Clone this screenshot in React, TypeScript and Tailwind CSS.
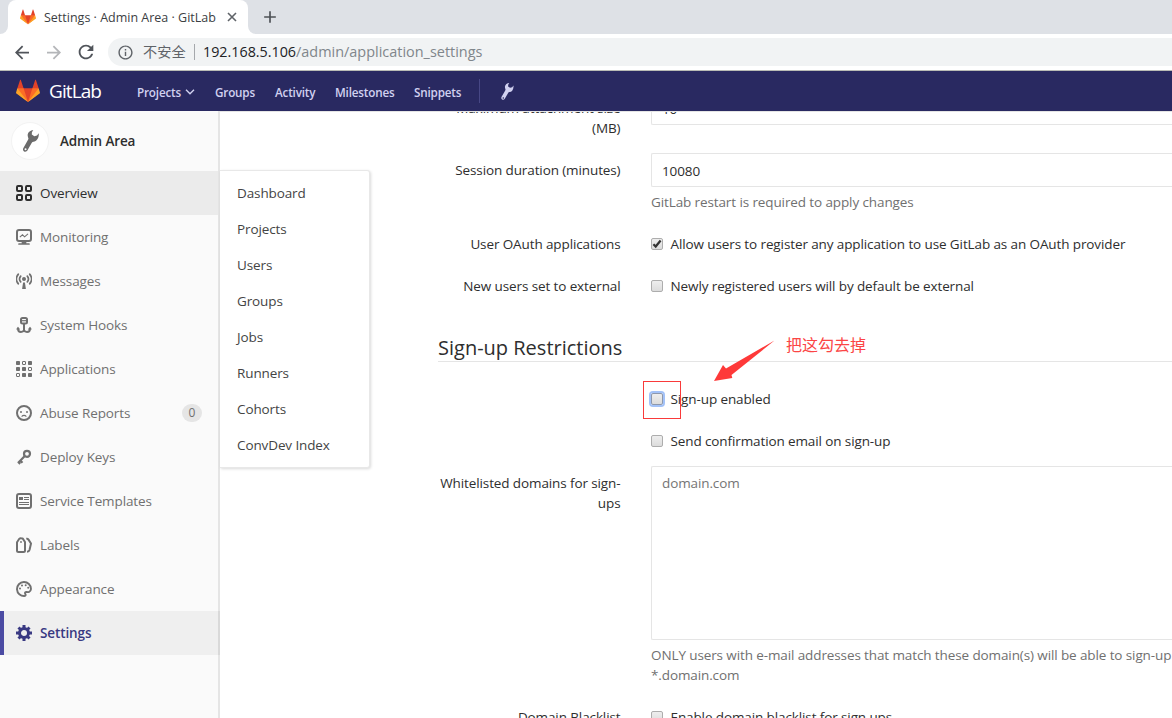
import React from "react";
import { MdAdd, MdArrowBack, MdArrowForward, MdInfoOutline, MdRefresh } from "react-icons/md";

function Tanuki({ className }: { className: string }) {
  return (
    <svg viewBox="0 0 36 36" className={className}>
      <path fill="#e24329" d="M2 14l9.38 9v-9l-4-12.28c-.205-.632-1.176-.632-1.38 0z" />
      <path fill="#e24329" d="M34 14l-9.38 9v-9l4-12.28c.205-.632 1.176-.632 1.38 0z" />
      <path fill="#e24329" d="M18 34.38 3 14h30z" />
      <path fill="#fc6d26" d="M18 34.38 11.38 14H2l4 11z" />
      <path fill="#fc6d26" d="M18 34.38 24.62 14H34l-4 11z" />
      <path fill="#fca326" d="M2 14L.1 20.16c-.18.565 0 1.2.5 1.56l17.42 12.66z" />
      <path fill="#fca326" d="M34 14l1.9 6.16c.18.565 0 1.2-.5 1.56L18 34.38z" />
    </svg>
  );
}

function Wrench({ className }: { className: string }) {
  return (
    <svg viewBox="0 0 16 22" className={className} fill="currentColor">
      <path
        fillRule="evenodd"
        d="M10.300 0C7.500.2 5 2 4.700 4.600c-.2 1.400.3 2.500.7 3.600.1.700-.1 1.200-.5 1.900L.4 17.900c-.8 1.400-.4 2.900.7 3.500 1.200.7 2.600.3 3.400-1.100l4.300-7.500c.4-.6.9-.9 1.700-1 3.300-.5 5.600-3.700 5.300-8.600L14 5.500l-2.700.700L8.800 4.500 8.900 2.200zM2.600 18.300a1 1 0 1 1-.1 2 1 1 0 0 1 .1-2z"
      />
    </svg>
  );
}

const icons: Record<string, React.ReactNode> = {
  overview: (
    <g fill="none" stroke="currentColor" strokeWidth="2">
      <rect x="1" y="1" width="5" height="5" rx="1" />
      <rect x="10" y="1" width="5" height="5" rx="1" />
      <rect x="1" y="10" width="5" height="5" rx="1" />
      <rect x="10" y="10" width="5" height="5" rx="1" />
    </g>
  ),
  monitoring: (
    <g fill="none" stroke="currentColor">
      <rect x="1" y="1" width="14" height="11" rx="2" strokeWidth="2" />
      <path d="M3.800 8.200 6.500 5.800 8.600 7.800 12 4.800" strokeWidth="1.100" />
      <path d="M6.500 12.500h3v1.500h-3zM3 15h10" strokeWidth="1.700" strokeLinecap="round" />
    </g>
  ),
  messages: (
    <g fill="none" stroke="currentColor" strokeLinecap="round">
      <circle cx="8" cy="6" r="2" fill="currentColor" stroke="none" />
      <path d="M7.100 9.500h1.800L9.900 16H6.100z" fill="currentColor" stroke="none" />
      <path d="M4.700 3.100a4.600 4.600 0 0 0 0 5.800M11.300 3.100a4.600 4.600 0 0 1 0 5.800" strokeWidth="1.700" />
      <path d="M2.200 1.300a7.300 7.300 0 0 0 0 9.400M13.800 1.300a7.300 7.300 0 0 1 0 9.400" strokeWidth="1.800" />
    </g>
  ),
  hooks: (
    <g fill="none" stroke="currentColor" strokeWidth="2" strokeLinejoin="round">
      <rect x="5" y="1" width="6" height="5.500" rx="1.500" />
      <path d="M5 3.700h6" strokeWidth="1.200" />
      <path d="M8 7v8" />
      <path d="M2 11.500C2 13.700 3.200 15 5 15c1.600 0 2.500-.7 3-2 .5 1.300 1.400 2 3 2 1.800 0 3-1.300 3-3.500" />
      <path d="M.7 12.500 2 10.500l1.500 2M12.500 12.500l1.500-2 1.300 2" strokeWidth="1.200" />
    </g>
  ),
  applications: (
    <g fill="currentColor">
      <rect width="4" height="4" rx=".8" />
      <rect x="12" width="4" height="4" rx=".8" />
      <rect y="6" width="4" height="4" rx=".8" />
      <rect x="6" y="6" width="4" height="4" rx=".8" />
      <rect x="6" y="12" width="4" height="4" rx=".8" />
      <rect x="12" y="12" width="4" height="4" rx=".8" />
      <g fill="none" stroke="currentColor">
        <rect x="6.500" y=".5" width="3" height="3" rx=".3" />
        <rect x="12.500" y="6.500" width="3" height="3" rx=".3" />
        <rect x=".5" y="12.500" width="3" height="3" rx=".3" />
      </g>
    </g>
  ),
  abuse: (
    <g fill="none" stroke="currentColor">
      <circle cx="8" cy="8" r="7" strokeWidth="2" />
      <circle cx="5" cy="7" r="1" fill="currentColor" stroke="none" />
      <circle cx="11" cy="7" r="1" fill="currentColor" stroke="none" />
      <path d="M6 11.300c.8-1.300 3.200-1.300 4 0" strokeWidth="1.200" strokeLinecap="round" />
    </g>
  ),
  key: (
    <g fill="none" stroke="currentColor" strokeWidth="2.200">
      <circle cx="11" cy="4.800" r="3" />
      <path d="M8.800 7 2 14M4.200 11.600l2.300 2.200M2.300 13l1.900 1.900" />
    </g>
  ),
  template: (
    <g fill="none" stroke="currentColor">
      <rect x="1" y="1" width="14" height="14" rx="2" strokeWidth="2" />
      <rect x="3" y="4" width="4" height="3" fill="currentColor" stroke="none" />
      <path d="M8 4.500H13M8 6.500H13M3 9.500H13M3 11.500H13" />
    </g>
  ),
  labels: (
    <g fill="none" stroke="currentColor" strokeWidth="2" strokeLinejoin="round">
      <path d="M1 5.300 3.300 1.800Q4 1 5.200 1.200L6.600 1.400 9 5v8.500q0 1.500-1.500 1.500h-5Q1 15 1 13.500z" />
      <circle cx="5" cy="5" r=".9" fill="currentColor" stroke="none" />
      <path d="M10.300 1.800q1.400-.3 2.200.8L15 6.500 13.500 13q-.5 1.700-2.500 1.800" />
    </g>
  ),
  appearance: (
    <g fill="none" stroke="currentColor">
      <path
        d="M15 8A7 7 0 1 0 8.500 15c1.400 0 1.300-1.100.8-2-.7-1.300.1-2.300 1.500-2 1 .3 3.900.4 4.200-3z"
        strokeWidth="1.900"
      />
      <g fill="currentColor" stroke="none">
        <circle cx="4" cy="7.500" r="1" />
        <circle cx="6" cy="4.400" r="1" />
        <circle cx="9.700" cy="4.200" r="1" />
        <circle cx="12.200" cy="6.800" r="1" />
      </g>
    </g>
  ),
  settings: (
    <g fill="none" stroke="currentColor">
      <circle cx="8" cy="8" r="4.500" strokeWidth="3" />
      <path
        d="M8 0v3M8 13v3M0 8h3M13 8h3M2.500 2.500l2 2M11.500 11.500l2 2M13.500 2.500l-2 2M4.500 11.500l-2 2"
        strokeWidth="3"
      />
    </g>
  ),
};

function Icon({ name }: { name: string }) {
  return (
    <svg viewBox="0 0 16 16" className="mr-2 h-4 w-4 shrink-0">
      {icons[name]}
    </svg>
  );
}

const menu = [
  { icon: "overview", label: "Overview" },
  { icon: "monitoring", label: "Monitoring" },
  { icon: "messages", label: "Messages" },
  { icon: "hooks", label: "System Hooks" },
  { icon: "applications", label: "Applications" },
  { icon: "abuse", label: "Abuse Reports", badge: "0" },
  { icon: "key", label: "Deploy Keys" },
  { icon: "template", label: "Service Templates" },
  { icon: "labels", label: "Labels" },
  { icon: "appearance", label: "Appearance" },
  { icon: "settings", label: "Settings" },
];

const overviewLinks = ["Dashboard", "Projects", "Users", "Groups", "Jobs", "Runners", "Cohorts", "ConvDev Index"];

function itemStyle(label: string) {
  if (label === "Overview") return "bg-[#ebebeb] pl-4 text-[#2e2e2e]";
  if (label === "Settings")
    return "-mr-0.5 border-l-4 border-r-2 border-l-[#4b4ba3] border-r-[#d9d9d9] bg-[#efefef] pl-3 font-semibold text-[#393982]";
  return "pl-4 text-[#707070]";
}

function Browser() {
  return (
    <div className="shrink-0 tracking-normal">
      <div className="flex h-[34px] bg-[#dee1e6]">
        <div className="flex w-2 items-end bg-white">
          <div className="h-full w-2 rounded-br-lg bg-[#dee1e6]" />
        </div>
        <div className="w-60 bg-[#dee1e6]">
          <div className="flex h-[34px] items-center rounded-t-lg bg-white pl-3">
            <Tanuki className="h-4 w-4" />
            <span className="ml-2 w-[183px] whitespace-nowrap pt-px text-[12.500px] text-[#3c4043]">
              Settings · Admin Area · GitLab
            </span>
            <svg viewBox="0 0 10 10" className="h-2.5 w-2.5" stroke="#5f6368" strokeWidth="1.600">
              <path d="M1 1l8 8M9 1L1 9" />
            </svg>
          </div>
        </div>
        <div className="w-2 bg-white">
          <div className="h-full w-2 rounded-bl-lg bg-[#dee1e6]" />
        </div>
        <div className="flex items-center pl-1">
          <MdAdd className="h-5 w-5 text-[#4d5156]" />
        </div>
      </div>
      <div className="flex h-9 items-center bg-white pl-[11px]">
        <MdArrowBack className="h-[21px] w-[22px] text-[#50545a]" />
        <MdArrowForward className="ml-2.5 h-[21px] w-[22px] text-[#b4b6b9]" />
        <MdRefresh className="ml-2.5 h-[22px] w-[22px] text-[#50545a]" />
        <div className="ml-[11px] flex h-7 flex-1 items-center whitespace-nowrap rounded-l-full bg-[#f1f3f4] pl-[9px]">
          <MdInfoOutline className="h-[17px] w-[17px] text-[#5f6368]" />
          <span className="ml-[9px] w-[44px] pb-0.5 font-['Noto_Sans_CJK_SC',sans-serif] text-[14.200px] text-[#5f6368]">
            不安全
          </span>
          <span className="ml-[7px] h-4 w-px bg-[#a5a8ac]" />
          <span className="ml-2 text-[14.300px] text-[#202124]">192.168.5.106</span>
          <span className="text-[14.450px] text-[#80868b]">/admin/application_settings</span>
        </div>
      </div>
      <div className="h-px bg-[#b9bbb5]" />
    </div>
  );
}

function Navbar() {
  return (
    <div className="flex h-10 shrink-0 items-center bg-[#292961] pl-4 text-[11.700px] font-semibold tracking-[-0.180px] text-[#d1d1f0]">
      <Tanuki className="h-6 w-6" />
      <span className="ml-[9px] w-[88px] text-[19px] font-normal tracking-[-0.9px] text-white">GitLab</span>
      <span className="flex w-[78px] items-center pt-px">
        Projects
        <svg viewBox="0 0 10 6" className="ml-[3.500px] h-1.5 w-2.5" fill="none" stroke="currentColor" strokeWidth="1.400">
          <path d="M1 .8l4 4 4-4" />
        </svg>
      </span>
      <span className="w-[60px] pt-px">Groups</span>
      <span className="w-[60px] pt-px">Activity</span>
      <span className="w-[79px] pt-px">Milestones</span>
      <span className="w-[65px] pt-px">Snippets</span>
      <span className="h-6 w-px bg-[#474785]" />
      <Wrench className="ml-[21px] h-[17px] w-[13px]" />
    </div>
  );
}

function Sidebar() {
  return (
    <div className="w-[220px] shrink-0 border-r-2 border-[#e5e5e5] bg-[#fafafa]">
      <div className="flex h-[60px] items-center pl-[11px]">
        <div className="flex h-[38px] w-[38px] items-center justify-center rounded-full border border-[#f3f3f3] bg-white text-[#6b6b6b]">
          <Wrench className="ml-0.5 h-[22px] w-4" />
        </div>
        <span className="ml-[11px] font-semibold text-[#2e2e2e]">Admin Area</span>
      </div>
      {menu.map((m) => (
        <div key={m.label} className={`flex h-11 items-center ${itemStyle(m.label)}`}>
          <Icon name={m.icon} />
          <span>{m.label}</span>
          {m.badge && (
            <span className="ml-auto mr-4 flex h-[18px] w-5 items-center justify-center rounded-full bg-[#e5e5e5] text-[12px]">
              {m.badge}
            </span>
          )}
        </div>
      ))}
    </div>
  );
}

function Flyout() {
  return (
    <div className="absolute left-[220px] top-[59px] w-[150px] rounded-r-[3px] border border-l-0 border-[#e8e8e8] bg-white py-1 shadow-[1px_1px_3px_rgba(0,0,0,0.15)]">
      {overviewLinks.map((l) => (
        <div key={l} className="flex h-9 items-center pl-[17px] text-[#444]">
          {l}
        </div>
      ))}
    </div>
  );
}

function Check({ label, checked, focused }: { label: string; checked?: boolean; focused?: boolean }) {
  return (
    <div className="flex h-5 items-center whitespace-nowrap">
      <span
        className={`flex h-3 w-3 shrink-0 items-center justify-center rounded-[2px] border bg-linear-to-b from-[#eeeeee] to-[#dcdcdc] ${
          focused ? "border-[#8d98ad] shadow-[0_0_0_2px_#a3c2f8]" : "border-[#adadad]"
        }`}
      >
        {checked && (
          <svg viewBox="0 0 10 10" className="h-2.5 w-2.5" fill="none" stroke="#333" strokeWidth="2.200">
            <path d="M1.400 5.200l2.300 2.300L8.600 1.500" />
          </svg>
        )}
      </span>
      <span className="ml-[7.500px]">{label}</span>
    </div>
  );
}

function Row({ label, className, children }: { label?: React.ReactNode; className: string; children: React.ReactNode }) {
  return (
    <div className={`flex shrink-0 ${className}`}>
      <div className="w-[401px] shrink-0 pr-[0.500px] pt-[7px] text-right leading-5">{label}</div>
      <div className="ml-[30px] min-w-0 flex-1">{children}</div>
    </div>
  );
}

function Form() {
  return (
    <div className="flex min-w-0 flex-1 flex-col overflow-hidden border-t border-[#e5e5e5] bg-white text-[#2e2e2e]">
      <Row className="-mt-[21px] h-[62px]" label={<>Maximum attachment size<br />(MB)</>}>
        <div className="flex h-[34px] items-center rounded-l-[2px] border border-r-0 border-[#e5e5e5] pl-2.5 pt-0.5">
          10
        </div>
      </Row>
      <Row className="h-[74px]" label="Session duration (minutes)">
        <div className="flex h-[34px] items-center rounded-l-[2px] border border-r-0 border-[#e5e5e5] pl-2.5 pt-0.5">
          10080
        </div>
        <div className="mt-[5px] leading-5 text-[#707070]">GitLab restart is required to apply changes</div>
      </Row>
      <Row className="h-[42px]" label="User OAuth applications">
        <div className="pt-[7px]">
          <Check checked label="Allow users to register any application to use GitLab as an OAuth provider" />
        </div>
      </Row>
      <Row className="h-[42px]" label="New users set to external">
        <div className="pt-[7px]">
          <Check label="Newly registered users will by default be external" />
        </div>
      </Row>
      <div className="ml-[218px] mt-[22px] flex h-[29px] shrink-0 items-center border-b border-[#e5e5e5] pt-0.5 text-[20px] tracking-normal">
        Sign-up Restrictions
      </div>
      <Row className="mt-5 h-[42px]">
        <div className="pt-[7px]">
          <Check focused label="Sign-up enabled" />
        </div>
      </Row>
      <Row className="h-[42px]">
        <div className="pt-[7px]">
          <Check label="Send confirmation email on sign-up" />
        </div>
      </Row>
      <Row className="h-[234px]" label={<>Whitelisted domains for sign-<br />ups</>}>
        <div className="h-[174px] rounded-l-[2px] border border-r-0 border-[#e5e5e5] pl-2.5 pt-1.5 leading-5 text-[#757575]">
          domain.com
        </div>
        <div className="mt-[5px] whitespace-nowrap leading-5 text-[#707070]">
          ONLY users with e-mail addresses that match these domain(s) will be able to sign-up
          <br />
          *.domain.com
        </div>
      </Row>
      <Row className="h-[42px]" label="Domain Blacklist">
        <div className="pt-[7px]">
          <Check label="Enable domain blacklist for sign ups" />
        </div>
      </Row>
    </div>
  );
}

function Annotation() {
  return (
    <>
      <div className="absolute left-[643px] top-[270px] h-[38px] w-[38px] border border-[#f93a3a]" />
      <svg viewBox="0 0 62 42" className="absolute left-[714px] top-[229px] h-[42px] w-[62px]">
        <path fill="#fe3939" d="M0 41L9 25l3 3.500L60.500.5 17.500 35l.8 3z" />
      </svg>
      <span className="absolute left-[786px] top-[221px] font-['Noto_Sans_CJK_SC',sans-serif] text-[16px] font-normal leading-6 tracking-normal text-[#fb4545]">
        把这勾去掉
      </span>
    </>
  );
}

export default function App() {
  return (
    <div className="flex h-[718px] w-[1172px] flex-col overflow-hidden bg-white font-['Open_Sans','Noto_Sans',sans-serif] text-[13.500px] leading-5 tracking-[-0.110px]">
      <Browser />
      <Navbar />
      <div className="relative flex min-h-0 flex-1">
        <Sidebar />
        <Form />
        <Flyout />
        <Annotation />
      </div>
    </div>
  );
}
